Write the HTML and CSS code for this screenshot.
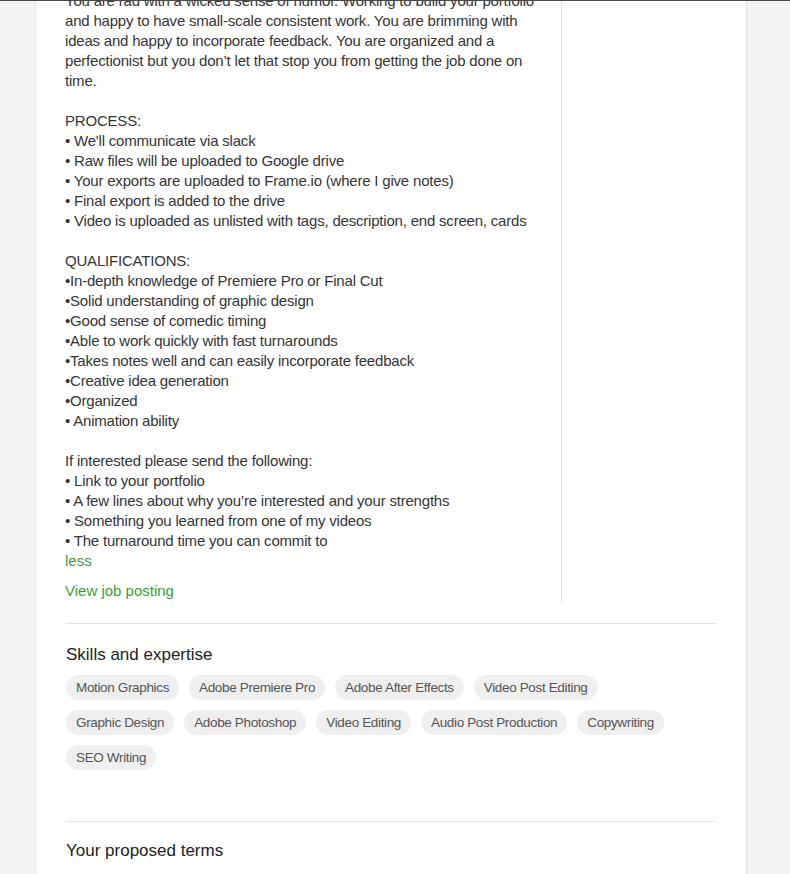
FILE: index.html
```html
<!DOCTYPE html>
<html>
<head>
<meta charset="utf-8">
<link rel="stylesheet" href="styles.css">
</head>
<body>
<div class="topline"></div>
<main class="card">
  <div class="cols">
    <section class="main-col">
      <div class="desc">You are rad with a wicked sense of humor. Working to build your portfolio
and happy to have small-scale consistent work. You are brimming with
ideas and happy to incorporate feedback. You are organized and a
perfectionist but you don’t let that stop you from getting the job done on
time.

PROCESS:
• We'll communicate via slack
• Raw files will be uploaded to Google drive
• Your exports are uploaded to Frame.io (where I give notes)
• Final export is added to the drive
• Video is uploaded as unlisted with tags, description, end screen, cards

QUALIFICATIONS:
•In-depth knowledge of Premiere Pro or Final Cut
•Solid understanding of graphic design
•Good sense of comedic timing
•Able to work quickly with fast turnarounds
•Takes notes well and can easily incorporate feedback
•Creative idea generation
•Organized
• Animation ability

If interested please send the following:
• Link to your portfolio
• A few lines about why you’re interested and your strengths
• Something you learned from one of my videos
• The turnaround time you can commit to</div>
      <a class="link" href="#">less</a>
      <a class="link view" href="#">View job posting</a>
    </section>
    <aside class="side-col"></aside>
  </div>
  <hr class="divider first">
  <section class="skills">
    <h4 class="heading">Skills and expertise</h4>
    <div class="chips">
      <span class="chip">Motion Graphics</span>
      <span class="chip">Adobe Premiere Pro</span>
      <span class="chip">Adobe After Effects</span>
      <span class="chip">Video Post Editing</span>
      <span class="chip">Graphic Design</span>
      <span class="chip">Adobe Photoshop</span>
      <span class="chip">Video Editing</span>
      <span class="chip">Audio Post Production</span>
      <span class="chip">Copywriting</span>
      <span class="chip">SEO Writing</span>
    </div>
  </section>
  <hr class="divider">
  <section class="terms">
    <h4 class="heading">Your proposed terms</h4>
  </section>
</main>
</body>
</html>
```
FILE: styles.css
```css
html, body {
  margin: 0;
  padding: 0;
}
body {
  background: #f2f3f5;
  font-family: "Liberation Sans", Arial, sans-serif;
  color: #353535;
  overflow: hidden;
  height: 874px;
}
.topline {
  position: fixed;
  top: 0;
  left: 0;
  right: 0;
  height: 1px;
  background: #4a4a4a;
  z-index: 5;
}
.card {
  margin-left: 35px;
  width: 710px;
  background: #fff;
  border-left: 1px solid #e2e3e5;
  border-right: 1px solid #e2e3e5;
  min-height: 900px;
  margin-top: -9px;
}
.cols {
  display: flex;
}
.main-col {
  width: 496px;
  padding: 0 0 1px 29px;
  border-right: 1px solid #e0e0e0;
  display: flex;
  flex-direction: column;
  align-items: flex-start;
}
.side-col {
  flex: 1;
}
.desc {
  white-space: pre-line;
  font-size: 15px;
  line-height: 20px;
  letter-spacing: -0.2px;
}
.link {
  color: #3aa13a;
  font-size: 15px;
  line-height: 20px;
  text-decoration: none;
  font-weight: 500;
}
.view {
  margin-top: 10px;
}
.divider {
  border: 0;
  border-top: 1px solid #e2e2e2;
  margin: 0 30px;
  height: 0;
}
.divider.first {
  margin-top: 21px;
}
.skills {
  padding: 19px 30px 51px 30px;
}
.heading {
  margin: 0;
  font-size: 17px;
  line-height: 24px;
  font-weight: 500;
  color: #222;
}
.chips {
  margin-top: 8px;
  padding-right: 10px;
  display: flex;
  flex-wrap: wrap;
  gap: 10px 10px;
}
.chip {
  background: #efefef;
  color: #555;
  font-size: 13.5px;
  line-height: 25px;
  height: 25px;
  padding: 0 10px;
  border-radius: 13px;
  letter-spacing: -0.35px;
}
.terms {
  padding: 17px 30px 0 30px;
}
```
